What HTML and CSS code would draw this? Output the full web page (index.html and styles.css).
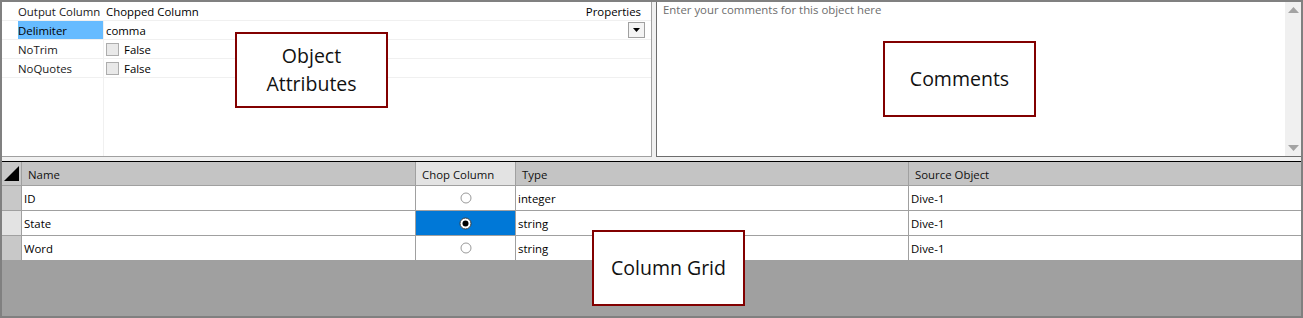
FILE: index.html
```html
<!DOCTYPE html>
<html>
<head>
<meta charset="utf-8">
<link rel="stylesheet" href="styles.css">
</head>
<body>
<div class="frame">
  <div class="top">
    <div class="props">
      <div class="prow head">
        <div class="plabel">Output Column</div>
        <div class="pval"><span>Chopped Column</span><span class="ptitle">Properties</span></div>
      </div>
      <div class="prow">
        <div class="plabel sel">Delimiter</div>
        <div class="pval"><span>comma</span>
          <span class="dd"><svg width="7" height="4" viewBox="0 0 7 4"><path d="M0 0H7L3.5 4Z" fill="#000"/></svg></span>
        </div>
      </div>
      <div class="prow">
        <div class="plabel">NoTrim</div>
        <div class="pval"><span class="cb"></span><span>False</span></div>
      </div>
      <div class="prow">
        <div class="plabel">NoQuotes</div>
        <div class="pval"><span class="cb"></span><span>False</span></div>
      </div>
      <div class="prow filler">
        <div class="plabel"></div>
        <div class="pval"></div>
      </div>
    </div>
    <div class="comments">
      <div class="ctext">Enter your comments for this object here</div>
      <div class="scroll">
        <svg width="11" height="6" viewBox="0 0 11 6"><path d="M0 6H11L5.5 0Z" fill="#a3a3a3"/></svg>
        <svg width="11" height="6" viewBox="0 0 11 6"><path d="M0 0H11L5.5 6Z" fill="#a3a3a3"/></svg>
      </div>
    </div>
  </div>

  <div class="grid">
    <div class="gc rh corner"><svg width="15" height="15" viewBox="0 0 15 15"><path d="M15 0V15H0Z" fill="#000"/></svg></div>
    <div class="gc hd">Name</div>
    <div class="gc hd cur">Chop Column</div>
    <div class="gc hd">Type</div>
    <div class="gc hd">Source Object</div>

    <div class="gc rh"></div>
    <div class="gc">ID</div>
    <div class="gc ctr"><svg class="radio" width="12" height="12" viewBox="0 0 12 12"><circle cx="6" cy="6" r="5" fill="#fff" stroke="#9a9a9a" stroke-width="1"/></svg></div>
    <div class="gc">integer</div>
    <div class="gc">Dive-1</div>

    <div class="gc rh cur"></div>
    <div class="gc">State</div>
    <div class="gc ctr selcell"><svg class="radio" width="13" height="13" viewBox="0 0 13 13"><circle cx="6.5" cy="6.5" r="5.5" fill="#fff" stroke="#3a3a3a" stroke-width="1"/><circle cx="6.5" cy="6.5" r="3" fill="#000"/></svg></div>
    <div class="gc">string</div>
    <div class="gc">Dive-1</div>

    <div class="gc rh"></div>
    <div class="gc">Word</div>
    <div class="gc ctr"><svg class="radio" width="12" height="12" viewBox="0 0 12 12"><circle cx="6" cy="6" r="5" fill="#fff" stroke="#9a9a9a" stroke-width="1"/></svg></div>
    <div class="gc">string</div>
    <div class="gc">Dive-1</div>
  </div>
  <div class="empty"></div>

  <div class="callout c-obj">Object<br>Attributes</div>
  <div class="callout c-com">Comments</div>
  <div class="callout c-grid">Column Grid</div>
</div>
</body>
</html>
```

FILE: styles.css
```css
* { box-sizing: border-box; }
html, body { margin: 0; padding: 0; background: #fff; }
body {
  font-family: "Open Sans", "Noto Sans", sans-serif;
  font-size: 11.4px;
  color: #000;
}
.frame {
  position: relative;
  width: 1303px;
  height: 318px;
  border: 2px solid #808080;
  background: #f0f0f0;
  display: flex;
  flex-direction: column;
}
.top {
  height: 155px;
  display: flex;
  gap: 4px;
  flex: none;
}
.props {
  width: 650px;
  background: #fff;
  border-right: 1px solid #a0a0a0;
  border-bottom: 1px solid #a0a0a0;
  display: flex;
  flex-direction: column;
}
.prow {
  display: flex;
  height: 19px;
  border-bottom: 1px solid #f0f0f0;
  align-items: stretch;
}
.prow.filler { flex: 1; border-bottom: none; }
.plabel {
  margin-left: 16px;
  width: 85px;
  display: flex;
  align-items: center;
  color: #1a1a1a;
}
.plabel.sel { background: #66bbff; color: #000; }
.pval {
  flex: 1;
  display: flex;
  align-items: center;
  padding-left: 2px;
  padding-right: 6px;
  border-left: 1px solid #f0f0f0;
}
.prow.head .pval { border-left-color: transparent; padding-right: 10px; }
.ptitle { margin-left: auto; }
.dd {
  margin-left: auto;
  width: 17px;
  height: 16px;
  border: 1px solid #a0a0a0;
  background: #f4f4f4;
  display: flex;
  align-items: center;
  justify-content: center;
}
.cb {
  width: 13px;
  height: 13px;
  border: 1px solid #adadad;
  background: #e9e9e9;
  margin-right: 5px;
}
.comments {
  flex: 1;
  background: #fff;
  border-left: 1px solid #6d6d6d;
  border-bottom: 1px solid #6d6d6d;
  display: flex;
}
.ctext {
  flex: 1;
  padding: 0 6px;
  color: #6d6d6d;
  line-height: 16px;
}
.scroll {
  width: 16px;
  background: #f0f0f0;
  display: flex;
  flex-direction: column;
  justify-content: space-between;
  align-items: center;
  padding: 5px 0 5px;
}
.grid {
  margin-top: 4px;
  border-top: 1px solid #000;
  background: #fff;
  display: grid;
  grid-template-columns: 20px 394px 100px 393px 1fr;
  grid-auto-rows: 25px;
  grid-template-rows: 24px;
  flex: none;
}
.gc {
  border-right: 1px solid #a0a0a0;
  border-bottom: 1px solid #a0a0a0;
  display: flex;
  align-items: center;
  padding-left: 2px;
  white-space: nowrap;
}
.gc:nth-child(5n) { border-right: none; }
.gc.hd { background: #c4c4c4; padding: 2px 0 0 6px; color: #111; }
.gc.hd.cur { background: #e3e3e3; }
.gc.rh { background: #c8c8c8; padding: 0; }
.gc.rh.cur { background: #e3e3e3; }
.gc.corner { align-items: flex-end; justify-content: flex-end; padding: 0 2px 4px 0; }
.gc.ctr { justify-content: center; padding-left: 0; }
.gc.selcell { background: #0078d7; }
.empty { flex: 1; background: #a0a0a0; }
.callout {
  position: absolute;
  width: 153px;
  height: 76px;
  border: 2px solid #820000;
  background: #fff;
  display: flex;
  align-items: center;
  justify-content: center;
  text-align: center;
  font-size: 19.5px;
  line-height: 28px;
  color: #111;
}
.c-obj { left: 233px; top: 30px; }
.c-com { left: 881px; top: 39px; }
.c-grid { left: 590px; top: 228px; }
```
